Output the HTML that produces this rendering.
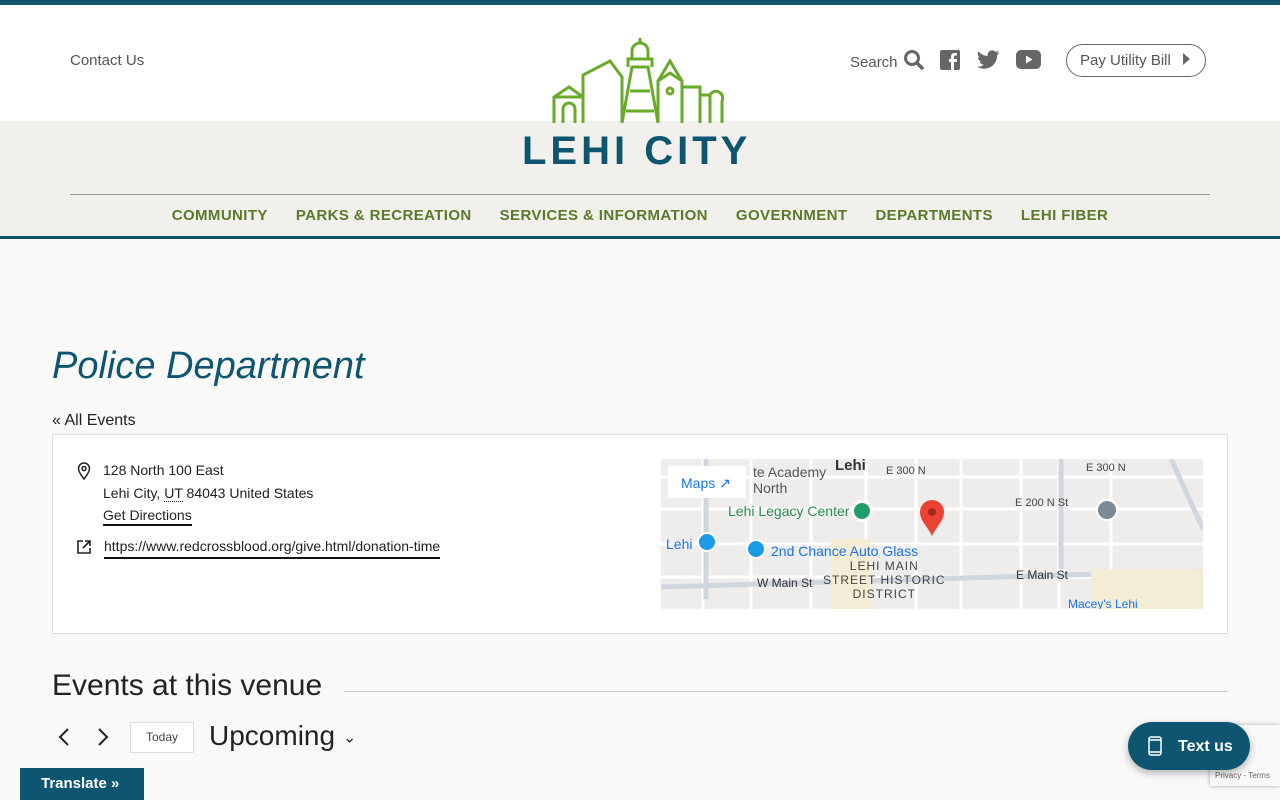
<!DOCTYPE html>
<html><head><meta charset="utf-8"><style>
*{box-sizing:border-box;margin:0;padding:0}
body{width:1280px;height:800px;overflow:hidden;background:#f9f9f8;font-family:"Liberation Sans",sans-serif;position:relative}
.a{position:absolute}
</style></head><body>
<div class="a" style="left:0;top:0;width:1280px;height:5px;background:#0e5670"></div>
<div class="a" style="left:0;top:5px;width:1280px;height:116px;background:#fff"></div>
<div class="a" style="left:0;top:121px;width:1280px;height:115px;background:#f1f0ec"></div>
<div class="a" style="left:0;top:236px;width:1280px;height:3px;background:#0e5670"></div>
<div class="a" style="left:70px;top:52px;font-size:15px;color:#555">Contact Us</div>
<svg class="a" style="left:550px;top:35px" width="176" height="88" viewBox="0 0 176 88" fill="none" stroke="#6aaa2a" stroke-width="3">
<path d="M4 88V62L19 52L33 62V88M4 62H33M13 88V74a6 6 0 0 1 12 0V88"/>
<path d="M33 88V40L60 26L72 42V88"/>
<path d="M72 88L82 32H98L108 88M80 56H100M76 76H104M78 32V24H102V32M82 24V16a8 8 0 0 1 16 0V24M90 8V3"/>
<path d="M108 88V46L120 38L132 46V88M108 46L120 26L132 46"/>
<circle cx="120" cy="56" r="3"/>
<path d="M132 88V52H150V88M150 60H160V88M160 60a6 6 0 0 1 12 6V88"/>
</svg>
<div class="a" style="left:522px;top:126px;width:260px;white-space:nowrap;font-size:40px;font-weight:bold;letter-spacing:4px;color:#0d5570;line-height:50px">LEHI CITY</div>
<div class="a" style="left:850px;top:54px;font-size:15px;color:#555">Search</div>
<svg class="a" style="left:903px;top:49px" width="22" height="22" viewBox="0 0 22 22"><circle cx="9" cy="9" r="6.5" fill="none" stroke="#666" stroke-width="3"/><path d="M14 14L20 20" stroke="#666" stroke-width="3.5"/></svg>
<svg class="a" style="left:940px;top:50px" width="20" height="20" viewBox="0 0 20 20"><rect width="20" height="20" rx="2" fill="#666"/><path d="M14 20V12h3V9h-3V7c0-1 .5-1.5 1.5-1.5H17V3h-2.5C12 3 11 4.5 11 7v2H9v3h2v8z" fill="#fff"/></svg>
<svg class="a" style="left:976px;top:50px" width="24" height="20" viewBox="0 0 24 20"><path d="M23 2.5c-.8.4-1.7.6-2.6.7.9-.6 1.6-1.4 2-2.5-.9.5-1.9.9-2.9 1.1A4.6 4.6 0 0 0 11.7 6C8 5.8 4.6 4 2.3 1.3c-1.3 2.2 0 4.8 1.5 6.1-.7 0-1.5-.2-2-.5 0 2.2 1.6 4.1 3.7 4.5-.7.2-1.4.2-2 .1.6 1.8 2.3 3.1 4.3 3.2A9.3 9.3 0 0 1 1 16.6 13 13 0 0 0 8 18.7c8.5 0 13.1-7 13.1-13.1v-.6c.9-.6 1.6-1.4 2.2-2.3z" fill="#666"/></svg>
<svg class="a" style="left:1016px;top:50px" width="25" height="19" viewBox="0 0 25 19"><rect width="25" height="19" rx="5" fill="#666"/><path d="M10 5.5v8l6.5-4z" fill="#fff"/></svg>
<div class="a" style="left:1066px;top:44px;width:140px;height:33px;border:1.5px solid #666;border-radius:17px;font-size:15px;color:#555;padding:7px 0 0 13px">Pay Utility Bill <span style="display:inline-block;width:0;height:0;border-left:7px solid #666;border-top:6px solid transparent;border-bottom:6px solid transparent;margin-left:8px"></span></div>
<div class="a" style="left:70px;top:194px;width:1140px;height:1px;background:#999"></div>
<div class="a" style="left:0;top:207px;width:1280px;text-align:center;font-size:15px;font-weight:bold;color:#5a7a2a;letter-spacing:0.4px;white-space:nowrap">
<span style="margin:0 14px">COMMUNITY</span><span style="margin:0 14px">PARKS &amp; RECREATION</span><span style="margin:0 14px">SERVICES &amp; INFORMATION</span><span style="margin:0 14px">GOVERNMENT</span><span style="margin:0 14px">DEPARTMENTS</span><span style="margin:0 14px">LEHI FIBER</span></div>
<div class="a" style="left:52px;top:345px;font-size:38px;font-style:italic;color:#0d5570">Police Department</div>
<div class="a" style="left:52px;top:412px;font-size:16px;color:#222">« All Events</div>
<div class="a" style="left:52px;top:434px;width:1176px;height:200px;border:1px solid #ddd;background:#fff"></div>
<svg class="a" style="left:77px;top:462px" width="14" height="18" viewBox="0 0 14 18"><path d="M7 17C3 12 1.5 9 1.5 6.5a5.5 5.5 0 0 1 11 0C12.5 9 11 12 7 17z" fill="none" stroke="#222" stroke-width="1.5"/><circle cx="7" cy="6.5" r="2" fill="none" stroke="#222" stroke-width="1.5"/></svg>
<div class="a" style="left:103px;top:459px;font-size:14px;color:#222;line-height:23px">128 North 100 East<br>Lehi City, <span style="border-bottom:1px dotted #222">UT</span> 84043 United States</div>
<div class="a" style="left:103px;top:507px;font-size:14px;color:#222;border-bottom:2px solid #111;padding-bottom:1px">Get Directions</div>
<svg class="a" style="left:76px;top:539px" width="16" height="16" viewBox="0 0 16 16" fill="none" stroke="#222" stroke-width="1.6"><path d="M7 2H2v12h12V9M9 2h5v5M14 2L7 9"/></svg>
<div class="a" style="left:104px;top:538px;font-size:14px;color:#222;border-bottom:2px solid #111;padding-bottom:3px">https://www.redcrossblood.org/give.html/donation-time</div>
<div class="a" style="left:661px;top:459px;width:542px;height:150px;background:#eeedeb;overflow:hidden">
<svg class="a" style="left:0;top:0" width="542" height="150"><g stroke="#fff" stroke-width="3"><path d="M0 18H542M0 50H542M0 85H542M0 118H542M42 0V150M90 0V150M150 0V150M205 0V150M255 0V150M300 0V150M360 0V150M398 0V150M450 0V150"/></g><g stroke="#cfd6de" stroke-width="5"><path d="M0 128L540 112M45 0V140M400 0V110M510 0L542 70"/></g><rect x="430" y="110" width="112" height="40" fill="#f4ecd5"/><rect x="170" y="80" width="40" height="70" fill="#f4ecd5"/></svg>
<div class="a" style="left:7px;top:7px;width:78px;height:32px;background:#fff;font-size:14px;color:#1a73e8;padding:9px 0 0 13px">Maps ↗</div>
<div class="a" style="left:92px;top:5px;font-size:14px;color:#555">te Academy<br>North</div>
<div class="a" style="left:174px;top:-2px;font-size:15px;color:#333;font-weight:bold">Lehi</div>
<div class="a" style="left:225px;top:6px;font-size:11px;color:#444">E 300 N</div>
<div class="a" style="left:425px;top:3px;font-size:11px;color:#444">E 300 N</div>
<div class="a" style="left:354px;top:38px;font-size:11px;color:#444">E 200 N St</div>
<div class="a" style="left:67px;top:44px;font-size:14px;color:#2e8b57">Lehi Legacy Center</div>
<div class="a" style="left:190px;top:41px;width:22px;height:22px;border-radius:50%;background:#1e9e6a;border:3px solid #fff"></div>
<div class="a" style="left:5px;top:77px;font-size:14px;color:#1a73e8">Lehi</div>
<div class="a" style="left:110px;top:84px;font-size:14px;color:#1a73e8">2nd Chance Auto Glass</div>
<div class="a" style="left:36px;top:73px;width:20px;height:20px;border-radius:50%;background:#1a9be8;border:2px solid #fff"></div>
<div class="a" style="left:85px;top:80px;width:20px;height:20px;border-radius:50%;background:#1a9be8;border:2px solid #fff"></div>
<div class="a" style="left:435px;top:40px;width:22px;height:22px;border-radius:50%;background:#7c8a95;border:2px solid #fff"></div>
<div class="a" style="left:162px;top:100px;font-size:12px;color:#444;letter-spacing:1px;text-align:center;line-height:14px">LEHI MAIN<br>STREET HISTORIC<br>DISTRICT</div>
<div class="a" style="left:96px;top:117px;font-size:12px;color:#333">W Main St</div>
<div class="a" style="left:355px;top:109px;font-size:12px;color:#333">E Main St</div>
<div class="a" style="left:407px;top:138px;font-size:12px;color:#1a73e8">Macey's Lehi</div>
<svg class="a" style="left:258px;top:40px" width="26" height="38" viewBox="0 0 26 38"><path d="M13 37C9 28 1 22 1 13a12 12 0 0 1 24 0c0 9-8 15-12 24z" fill="#ea4335"/><circle cx="13" cy="13" r="4" fill="#a52714"/></svg>
</div>
<div class="a" style="left:52px;top:669px;font-size:30px;color:#222">Events at this venue</div>
<div class="a" style="left:344px;top:691px;width:884px;height:1px;background:#ccc"></div>
<svg class="a" style="left:56px;top:727px" width="60" height="20" fill="none" stroke="#222" stroke-width="2"><path d="M12 2L4 10L12 18M43 2L51 10L43 18"/></svg>
<div class="a" style="left:130px;top:722px;width:64px;height:31px;border:1px solid #ddd;background:#fff;font-size:12px;color:#444;text-align:center;line-height:29px">Today</div>
<div class="a" style="left:209px;top:720px;font-size:28px;color:#222">Upcoming <span style="font-size:16px;vertical-align:middle">⌄</span></div>
<div class="a" style="left:1210px;top:725px;width:70px;height:61px;background:#f9f9f9;box-shadow:0 0 4px #aaa"></div>
<div class="a" style="left:1215px;top:771px;font-size:8px;color:#666">Privacy - Terms</div>
<div class="a" style="left:1128px;top:722px;width:122px;height:48px;border-radius:24px;background:#0d5570;color:#fff;font-weight:bold;font-size:16px;padding:16px 0 0 50px;box-shadow:0 3px 8px rgba(0,0,0,.3)">Text us</div>
<svg class="a" style="left:1148px;top:736px" width="14" height="20" fill="none" stroke="#fff" stroke-width="1.5"><rect x="1" y="1" width="12" height="18" rx="2"/><path d="M1 4H13M1 16H13"/></svg>
<div class="a" style="left:20px;top:768px;width:124px;height:32px;background:#0d5570;color:#fff;font-weight:bold;font-size:15px;padding:7px 0 0 21px">Translate »</div>
</body></html>
